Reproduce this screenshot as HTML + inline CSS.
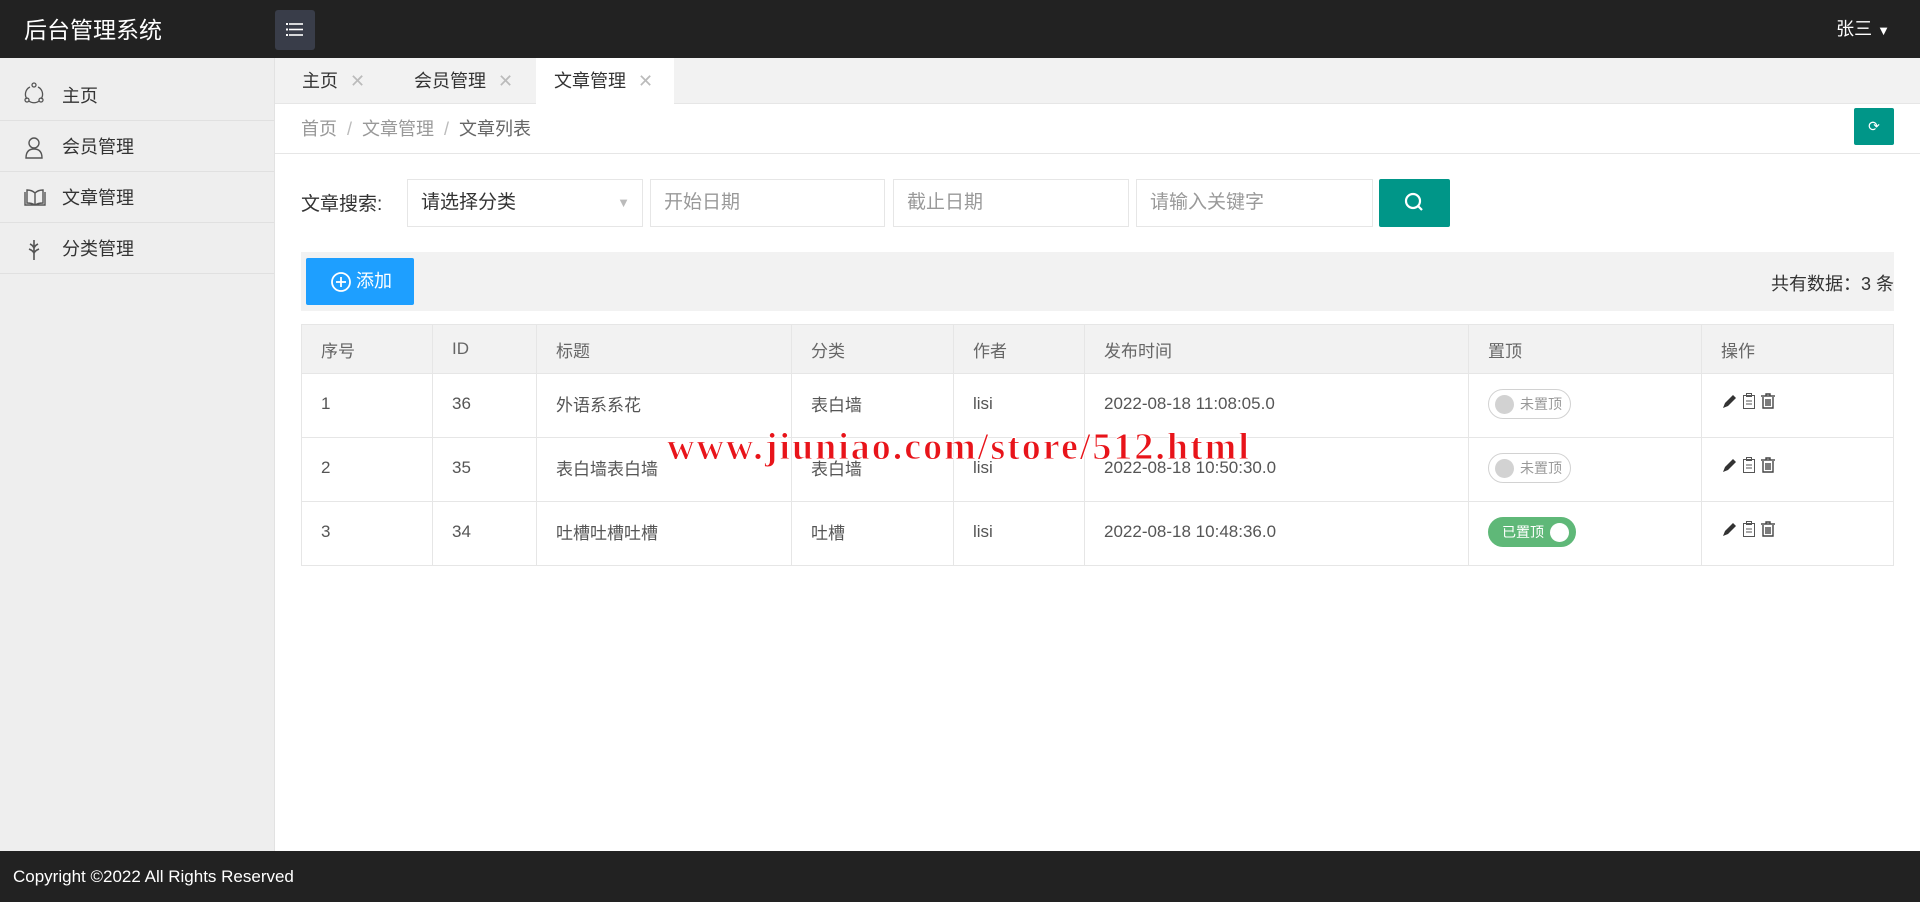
<!DOCTYPE html>
<html><head><meta charset="utf-8"><style>
*{margin:0;padding:0;box-sizing:border-box}
body{width:1920px;height:902px;overflow:hidden;background:#fff;font-family:"Liberation Sans","Noto Sans CJK SC",sans-serif;color:#333;position:relative}
.hd{position:absolute;left:0;top:0;width:1920px;height:58px;background:#222}
.logo{position:absolute;left:24px;top:11px;color:#fff;font-size:23px}
.menu{position:absolute;left:275px;top:10px;width:40px;height:40px;background:#393d49;border-radius:3px}
.user{position:absolute;right:30px;top:15px;color:#fff;font-size:18px}
.side{position:absolute;left:0;top:58px;width:275px;height:793px;background:#eee;border-right:1px solid #e2e2e2}
.si{height:51px;border-bottom:1px solid #e0e0e0;display:flex;align-items:center;padding-left:62px;font-size:18px;color:#333;position:relative}
.si svg{position:absolute;left:24px;top:16px}
.tabs{position:absolute;left:275px;top:58px;width:1645px;height:46px;background:#f2f2f2;border-bottom:1px solid #e6e6e6}
.tab{position:absolute;top:0;height:46px;line-height:46px;font-size:18px;color:#333}
.tab i{font-style:normal;color:#bbb;margin-left:12px;font-size:18px}
.bc{position:absolute;left:301px;top:115px;font-size:18px;color:#999}
.bc span{margin:0 10px;color:#bbb}
.bcl{position:absolute;left:275px;top:153px;width:1645px;height:1px;background:#e6e6e6}
.ref{position:absolute;left:1854px;top:108px;width:40px;height:37px;background:#009688;color:#fff;text-align:center;line-height:37px;font-size:14px;border-radius:2px}
.lab{position:absolute;left:301px;top:189px;font-size:19px}
.inp{position:absolute;top:179px;height:48px;border:1px solid #e6e6e6;font-size:19px;color:#999;padding-left:13px;line-height:46px;background:#fff}
.sb{position:absolute;left:1379px;top:179px;width:71px;height:48px;background:#009688;border-radius:2px}
.tb{position:absolute;left:301px;top:252px;width:1593px;height:59px;background:#f2f2f2}
.add{position:absolute;left:306px;top:258px;width:108px;height:47px;background:#1e9fff;color:#fff;font-size:18px;line-height:47px;padding-left:50px;border-radius:2px}
.cnt{position:absolute;right:26px;top:270px;font-size:18px;color:#333}
table{position:absolute;left:301px;top:324px;width:1593px;border-collapse:collapse;font-size:17px;color:#555}
td,th{border:1px solid #e6e6e6;text-align:left;padding-left:19px;font-weight:normal;height:64px;vertical-align:middle}
td{padding-bottom:4px}
th{background:#f2f2f2;height:49px;color:#666;padding-bottom:0}
.sw{display:inline-block;height:30px;border-radius:15px;border:1px solid #d2d2d2;font-size:14px;color:#999;line-height:28px;padding:0 8px 0 31px;position:relative}
.sw:before{content:"";position:absolute;left:6px;top:5px;width:19px;height:19px;border-radius:50%;background:#d2d2d2}
.sw.on{background:#5fb878;border-color:#5fb878;color:#fff;padding:0 31px 0 13px}
.sw.on:before{left:auto;right:6px;background:#fff}
.ft{position:absolute;left:0;top:851px;width:1920px;height:51px;background:#222;color:#fff;font-size:17px;line-height:51px;padding-left:13px}
.wm{position:absolute;left:667px;top:425px;font-family:"Liberation Serif",serif;font-weight:bold;font-size:38px;color:#e8141a;-webkit-text-stroke:1px #fff;text-shadow:0 0 2px #fff;letter-spacing:2px}
</style></head><body>
<div class="hd"><div class="logo">后台管理系统</div>
<div class="menu"><svg width="40" height="40" viewBox="0 0 40 40"><g stroke="#fff" stroke-width="1.6"><line x1="14" y1="14" x2="28" y2="14"/><line x1="14" y1="19.5" x2="28" y2="19.5"/><line x1="14" y1="25" x2="28" y2="25"/></g><g fill="#fff"><rect x="11" y="13" width="2" height="2"/><rect x="11" y="18.5" width="2" height="2"/><rect x="11" y="24" width="2" height="2"/></g></svg></div>
<div class="user">张三 <span style="font-size:13px">▼</span></div></div>
<div class="side">
<div class="si" style="height:63px;padding-top:12px"><svg width="20" height="22" viewBox="0 0 20 22" style="top:24px"><g fill="none" stroke="#555" stroke-width="1.3"><path d="M6 5 A8 8 0 0 0 3 17 M14 5 A8 8 0 0 1 17 17 M5 19 A8 8 0 0 0 15 19"/><circle cx="10" cy="3" r="2"/><circle cx="3" cy="18" r="2"/><circle cx="17" cy="18" r="2"/></g></svg>主页</div>
<div class="si"><svg width="20" height="22" viewBox="0 0 20 22"><g fill="none" stroke="#555" stroke-width="1.4"><circle cx="10" cy="6" r="5"/><path d="M2 21 Q2 12 10 12 Q18 12 18 21 Z"/></g></svg>会员管理</div>
<div class="si"><svg width="22" height="20" viewBox="0 0 22 20"><g fill="none" stroke="#555" stroke-width="1.4"><path d="M1 4 V17 H21 V4 M3 2 Q8 2 11 5 Q14 2 19 2 V15 Q14 15 11 17 Q8 15 3 15Z M11 5 V17"/></g></svg>文章管理</div>
<div class="si"><svg width="20" height="22" viewBox="0 0 20 22"><g fill="none" stroke="#555" stroke-width="1.6"><path d="M10 1 V21 M6 5 Q10 7 10 10 M14 5 Q10 7 10 10 M5 10 Q10 12 10 15 M15 10 Q10 12 10 15"/></g></svg>分类管理</div>
</div>
<div class="tabs">
<div class="tab" style="left:27px">主页<i>✕</i></div>
<div class="tab" style="left:139px">会员管理<i>✕</i></div>
<div class="tab" style="left:261px;width:138px;background:#fff;padding-left:18px;height:47px">文章管理<i>✕</i></div>
</div>
<div class="bc">首页<span>/</span>文章管理<span>/</span><span style="margin:0;color:#666">文章列表</span></div>
<div class="bcl"></div>
<div class="ref">⟳</div>
<div class="lab">文章搜索:</div>
<div class="inp" style="left:407px;width:236px;color:#333">请选择分类<span style="position:absolute;right:12px;top:0;color:#bbb;font-size:13px">▼</span></div>
<div class="inp" style="left:650px;width:235px">开始日期</div>
<div class="inp" style="left:893px;width:236px">截止日期</div>
<div class="inp" style="left:1136px;width:237px">请输入关键字</div>
<div class="sb"><svg width="71" height="48" viewBox="0 0 71 48"><g fill="none" stroke="#fff" stroke-width="2.2"><circle cx="34" cy="22" r="7"/><line x1="39" y1="27" x2="43" y2="31"/></g></svg></div>
<div class="tb"></div>
<div class="add"><svg width="22" height="22" viewBox="0 0 22 22" style="position:absolute;left:24px;top:13px"><g fill="none" stroke="#fff" stroke-width="1.8"><circle cx="11" cy="11" r="9"/><line x1="11" y1="6" x2="11" y2="16"/><line x1="6" y1="11" x2="16" y2="11"/></g></svg>添加</div>
<div class="cnt">共有数据：3 条</div>
<table>
<tr><th style="width:131px">序号</th><th style="width:104px">ID</th><th style="width:255px">标题</th><th style="width:162px">分类</th><th style="width:131px">作者</th><th style="width:384px">发布时间</th><th style="width:233px">置顶</th><th>操作</th></tr>
<tr><td>1</td><td>36</td><td>外语系系花</td><td>表白墙</td><td>lisi</td><td>2022-08-18 11:08:05.0</td><td><span class="sw">未置顶</span></td><td><svg width="60" height="18" viewBox="0 0 60 18"><path d="M2 16 L4 11 L12 3 L15 6 L7 14 Z" fill="#333"/><g fill="none" stroke="#555" stroke-width="1"><rect x="22.5" y="3.5" width="11" height="13"/><rect x="25.5" y="1.5" width="5" height="3"/><line x1="25" y1="9" x2="31" y2="9"/><line x1="25" y1="12" x2="31" y2="12"/></g><g fill="none" stroke="#444" stroke-width="1.4"><line x1="40" y1="4" x2="54" y2="4"/><path d="M42 5 V16 H52 V5 M45 7 V14 M47 7 V14 M49 7 V14 M45 4 V2 H49 V4"/></g></svg></td></tr>
<tr><td>2</td><td>35</td><td>表白墙表白墙</td><td>表白墙</td><td>lisi</td><td>2022-08-18 10:50:30.0</td><td><span class="sw">未置顶</span></td><td><svg width="60" height="18" viewBox="0 0 60 18"><path d="M2 16 L4 11 L12 3 L15 6 L7 14 Z" fill="#333"/><g fill="none" stroke="#555" stroke-width="1"><rect x="22.5" y="3.5" width="11" height="13"/><rect x="25.5" y="1.5" width="5" height="3"/><line x1="25" y1="9" x2="31" y2="9"/><line x1="25" y1="12" x2="31" y2="12"/></g><g fill="none" stroke="#444" stroke-width="1.4"><line x1="40" y1="4" x2="54" y2="4"/><path d="M42 5 V16 H52 V5 M45 7 V14 M47 7 V14 M49 7 V14 M45 4 V2 H49 V4"/></g></svg></td></tr>
<tr><td>3</td><td>34</td><td>吐槽吐槽吐槽</td><td>吐槽</td><td>lisi</td><td>2022-08-18 10:48:36.0</td><td><span class="sw on">已置顶</span></td><td><svg width="60" height="18" viewBox="0 0 60 18"><path d="M2 16 L4 11 L12 3 L15 6 L7 14 Z" fill="#333"/><g fill="none" stroke="#555" stroke-width="1"><rect x="22.5" y="3.5" width="11" height="13"/><rect x="25.5" y="1.5" width="5" height="3"/><line x1="25" y1="9" x2="31" y2="9"/><line x1="25" y1="12" x2="31" y2="12"/></g><g fill="none" stroke="#444" stroke-width="1.4"><line x1="40" y1="4" x2="54" y2="4"/><path d="M42 5 V16 H52 V5 M45 7 V14 M47 7 V14 M49 7 V14 M45 4 V2 H49 V4"/></g></svg></td></tr>
</table>
<div class="wm">www.jiuniao.com/store/512.html</div>
<div class="ft">Copyright ©2022 All Rights Reserved</div>
</body></html>
